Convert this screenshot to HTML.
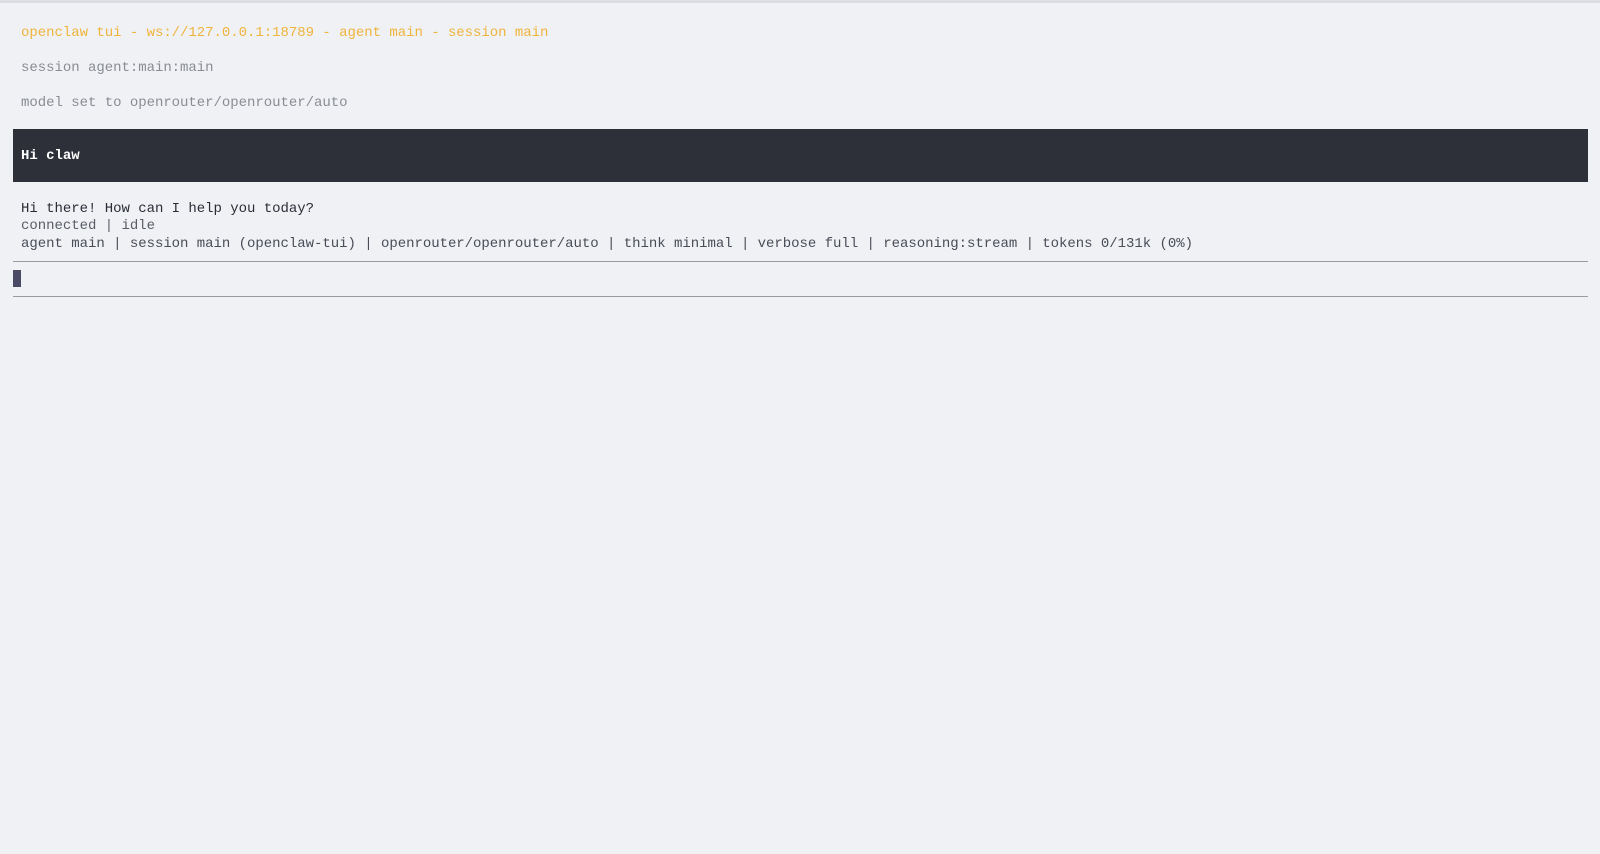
<!DOCTYPE html>
<html><head><style>
html,body{margin:0;padding:0;width:1600px;height:854px;background:#eff1f5;overflow:hidden}
body{font-family:"Liberation Mono",monospace;font-size:14px;letter-spacing:-0.03px;position:relative}
.t{position:absolute;left:21px;white-space:pre;line-height:17px}
</style></head><body>
<div style="position:absolute;left:0;top:0;width:1600px;height:3px;background:#dcdde2"></div>
<div class="t" style="top:25px;color:#f0b43c">openclaw tui - ws://127.0.0.1:18789 - agent main - session main</div>
<div class="t" style="top:60px;color:#8a8c94">session agent:main:main</div>
<div class="t" style="top:95px;color:#8a8c94">model set to openrouter/openrouter/auto</div>
<div style="position:absolute;left:13px;top:129px;width:1575px;height:53px;background:#2d3039"></div>
<div class="t" style="top:148px;color:#fff;font-weight:bold">Hi claw</div>
<div class="t" style="top:201px;color:#2a2d36">Hi there! How can I help you today?</div>
<div class="t" style="top:218px;color:#5a5d66">connected | idle</div>
<div class="t" style="top:236px;color:#4a4d56">agent main | session main (openclaw-tui) | openrouter/openrouter/auto | think minimal | verbose full | reasoning:stream | tokens 0/131k (0%)</div>
<div style="position:absolute;left:13px;top:261px;width:1575px;height:1px;background:#9a9ca2"></div>
<div style="position:absolute;left:13px;top:270px;width:8px;height:17px;background:#4a4a66"></div>
<div style="position:absolute;left:13px;top:296px;width:1575px;height:1px;background:#9a9ca2"></div>
</body></html>
